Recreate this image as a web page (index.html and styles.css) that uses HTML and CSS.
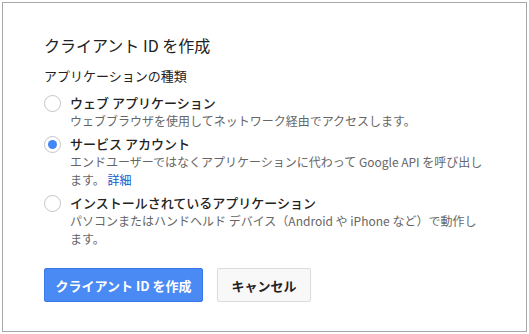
FILE: index.html
```html
<!DOCTYPE html>
<html lang="ja">
<head>
<meta charset="utf-8">
<link rel="stylesheet" href="styles.css">
</head>
<body>
<div class="page">
  <div class="dialog">
    <h1 class="title">クライアント ID を作成</h1>
    <div class="section-label">アプリケーションの種類</div>
    <div class="options">
      <div class="option">
        <span class="radio"></span>
        <div class="option-body">
          <div class="option-label">ウェブ アプリケーション</div>
          <div class="option-desc">ウェブブラウザを使用してネットワーク経由でアクセスします。</div>
        </div>
      </div>
      <div class="option">
        <span class="radio checked"></span>
        <div class="option-body">
          <div class="option-label">サービス アカウント</div>
          <div class="option-desc">エンドユーザーではなくアプリケーションに代わって Google API を呼び出します。 <a class="link" href="#">詳細</a></div>
        </div>
      </div>
      <div class="option">
        <span class="radio"></span>
        <div class="option-body">
          <div class="option-label">インストールされているアプリケーション</div>
          <div class="option-desc">パソコンまたはハンドヘルド デバイス（Android や iPhone など）で動作します。</div>
        </div>
      </div>
    </div>
    <div class="actions">
      <button class="btn primary">クライアント ID を作成</button>
      <button class="btn secondary">キャンセル</button>
    </div>
  </div>
</div>
</body>
</html>
```
FILE: styles.css
```css
html, body {
  margin: 0;
  padding: 0;
  background: #ffffff;
}
body {
  font-family: "Noto Sans CJK JP", "Noto Sans", sans-serif;
  color: #222;
}
.page {
  padding: 2px;
}
.dialog {
  box-sizing: border-box;
  width: 525px;
  height: 330px;
  border: 1px solid #a8a8a8;
  background: #fff;
  padding: 30px 42px 0 41px;
}
.title {
  margin: 0;
  font-size: 16px;
  font-weight: 400;
  line-height: 24px;
  color: #222;
}
.section-label {
  margin-top: 10px;
  font-size: 13px;
  line-height: 18px;
  color: #222;
}
.options {
  display: flex;
  flex-direction: column;
  gap: 5px;
  margin-top: 9px;
}
.option {
  display: flex;
  align-items: flex-start;
  gap: 9px;
}
.radio {
  flex: none;
  box-sizing: border-box;
  width: 17px;
  height: 17px;
  margin-top: 1px;
  border: 1px solid #c4c4c4;
  border-radius: 50%;
  background: #fff;
  position: relative;
}
.radio.checked::after {
  content: "";
  position: absolute;
  left: 3px;
  top: 3px;
  width: 9px;
  height: 9px;
  border-radius: 50%;
  background: #4285f4;
}
.option-body {
  flex: 1;
  max-width: 420px;
}
.option-label {
  font-size: 13px;
  line-height: 18px;
  font-weight: 500;
  color: #222;
}
.option-desc {
  font-size: 12px;
  line-height: 18px;
  color: #666;
}
.link {
  color: #1155cc;
  text-decoration: none;
}
.actions {
  display: flex;
  gap: 14px;
  margin-top: 20px;
}
.btn {
  box-sizing: border-box;
  height: 34px;
  border-radius: 2px;
  font-family: "Noto Sans CJK JP", "Noto Sans", sans-serif;
  font-size: 13px;
  font-weight: 700;
  padding: 0;
  white-space: nowrap;
  cursor: pointer;
}
.btn.primary {
  width: 159px;
  background: #4a8af4;
  border: 1px solid #3b78e7;
  color: #fff;
}
.btn.secondary {
  width: 94px;
  background: #f8f8f8;
  border: 1px solid #dcdcdc;
  color: #222;
}
```
